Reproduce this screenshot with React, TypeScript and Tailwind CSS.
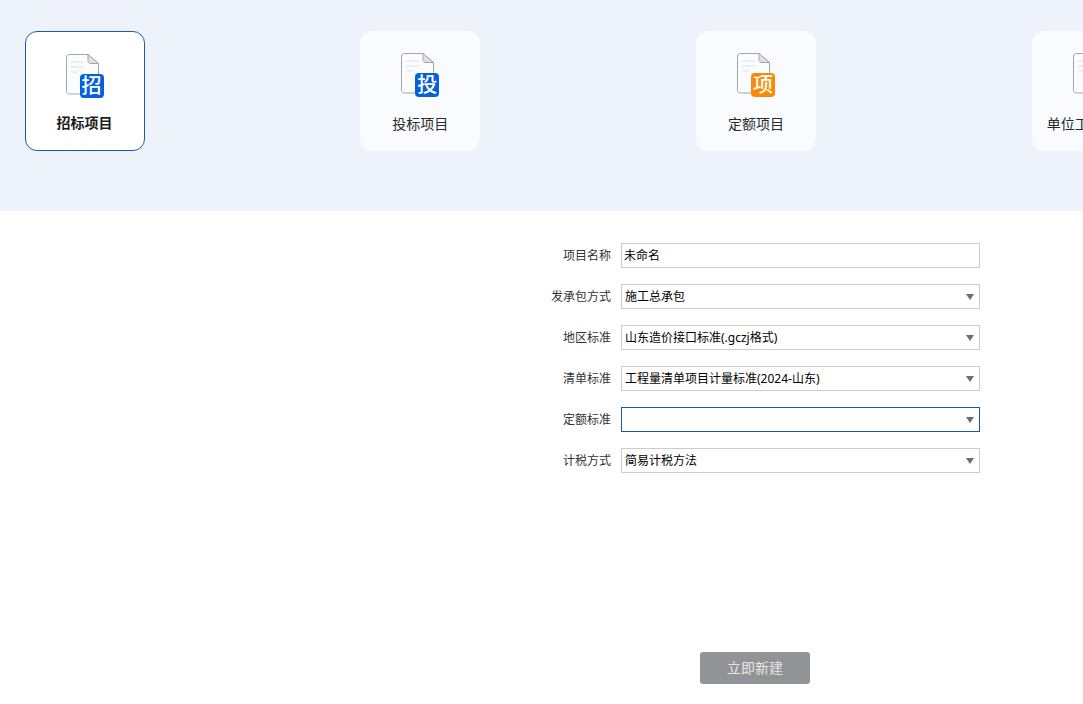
import { ChangeEvent, useState } from "react";

interface ProjectType {
  id: string;
  name: string;
  badge: string;
  badgeClass: string;
}

const projectTypes: ProjectType[] = [
  { id: "zb", name: "招标项目", badge: "招", badgeClass: "bg-[#0560db]" },
  { id: "tb", name: "投标项目", badge: "投", badgeClass: "bg-[#0560db]" },
  { id: "de", name: "定额项目", badge: "项", badgeClass: "bg-[#f98a06]" },
  { id: "dw", name: "单位工程项目", badge: "单", badgeClass: "bg-[#0560db]" },
];

const rows = [
  { label: "发承包方式", value: "施工总承包" },
  { label: "地区标准", value: "山东造价接口标准(.gczj格式)" },
  { label: "清单标准", value: "工程量清单项目计量标准(2024-山东)" },
  { label: "定额标准", value: "", focused: true },
  { label: "计税方式", value: "简易计税方法" },
];

const DocIcon = ({ badge, badgeClass }: { badge: string; badgeClass: string }) => (
  <div className="relative h-[44px] w-[38px]">
    <svg width="33" height="41" viewBox="0 0 33 41" fill="none" className="absolute left-0 top-0">
      <path
        d="M3.5 0.5H22L32.5 9.5V37.5C32.5 39 31.5 40 30 40H3.5C2 40 0.5 39 0.5 37.5V3C0.5 1.5 2 0.5 3.5 0.5Z"
        fill="#fbfcfe"
        stroke="#a2a5ae"
      />
      <path d="M22 0.5V6.5C22 8.5 23.5 9.5 25 9.5H32.5L22 0.5Z" fill="#dfe2e8" stroke="#a2a5ae" />
      <rect x="5" y="7" width="13" height="2" fill="#eceef2" />
      <rect x="5" y="12" width="13" height="2" fill="#eceef2" />
      <rect x="5" y="17" width="7" height="2" fill="#eceef2" />
    </svg>
    <span
      className={`absolute left-[14px] top-[20px] flex h-[24px] w-[24px] items-center justify-center rounded-[4px] pb-px text-[20px] font-medium leading-none text-white ${badgeClass}`}
    >
      {badge}
    </span>
  </div>
);

const App = () => {
  const [name, setName] = useState("未命名");

  return (
    <div className="h-[704px] w-[1083px] overflow-hidden bg-white font-['Noto_Sans','Noto_Sans_CJK_SC','Liberation_Sans',sans-serif] text-[12px] text-[#222]">
      <div className="flex h-[211px] gap-[215.7px] overflow-hidden bg-[#eef3fb] pl-[24.6px] pt-[31px]">
        {projectTypes.map((item, i) => (
          <div
            key={item.id}
            className={`flex h-[120px] w-[120px] shrink-0 flex-col items-center rounded-[12px] pt-[22px] ${
              i === 0 ? "border border-[#1e5aa8] bg-white" : "bg-[#f9fbfe]"
            }`}
          >
            <DocIcon badge={item.badge} badgeClass={item.badgeClass} />
            <p
              className={`whitespace-nowrap text-[14px] leading-[20px] ${
                i === 0 ? "mt-[15px] font-semibold text-[#1c1c1c]" : "mt-[17px] text-[#2a2a2a]"
              } ${i === 3 ? "mr-[6px]" : ""}`}
            >
              {item.name}
            </p>
          </div>
        ))}
      </div>

      <div className="flex flex-col items-end gap-4 pr-[103px] pt-[32px]">
        <div className="flex items-center gap-[10px]">
          <label className="whitespace-nowrap text-[#333]">项目名称</label>
          <input
            value={name}
            onChange={(e: ChangeEvent<HTMLInputElement>) => setName(e.target.value)}
            className="h-[25px] w-[359px] border border-[#cccccc] px-[2px] pb-[2px] text-[12px] text-black outline-none"
          />
        </div>
        {rows.map((row) => (
          <div key={row.label} className="flex items-center gap-[10px]">
            <label className="whitespace-nowrap text-[#333]">{row.label}</label>
            <div
              className={`flex h-[25px] w-[359px] items-center justify-between border pl-[3px] pr-[5px] text-black ${
                row.focused ? "border-[#1a56b0]" : "border-[#cccccc]"
              }`}
            >
              <span className="whitespace-nowrap">{row.value}</span>
              <span className="h-0 w-0 border-x-[4px] border-t-[6px] border-x-transparent border-t-[#6b6e75]" />
            </div>
          </div>
        ))}
      </div>

      <div className="ml-[700px] mt-[179px]">
        <button className="h-[32px] w-[110px] rounded-[3px] bg-[#929396] pb-[2px] text-[14px] text-[#e6e6e6]">
          立即新建
        </button>
      </div>
    </div>
  );
};

export default App;
